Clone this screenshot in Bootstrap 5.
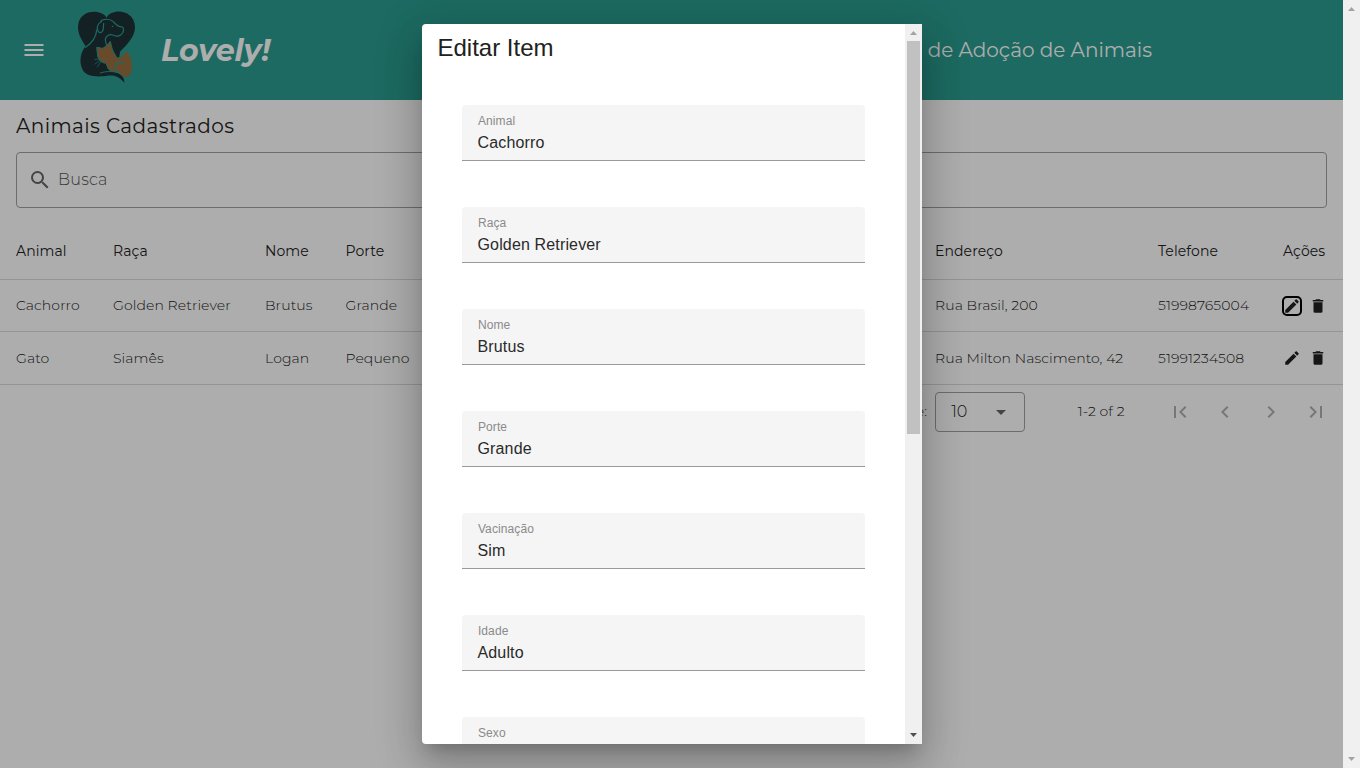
<!DOCTYPE html>
<html lang="pt-BR">
<head>
<meta charset="utf-8">
<meta name="viewport" content="width=device-width, initial-scale=1">
<title>Lovely!</title>
<link href="https://cdn.jsdelivr.net/npm/bootstrap@5.3.0/dist/css/bootstrap.min.css" rel="stylesheet">
<script src="https://cdn.jsdelivr.net/npm/bootstrap@5.3.0/dist/js/bootstrap.bundle.min.js"></script>
<style>
html,body{height:768px;overflow:hidden}
body{font-family:Montserrat,Inter,sans-serif;color:#212121;background:#fff}
.page{width:1343px;height:768px;position:relative;overflow:hidden}
.topbar{height:100px;background:#2a9d8f;color:#fff;padding:0 24px}
.logo{width:75px;height:80px;margin:-10px 0 0 26px}
.brandname{font-weight:700;font-style:italic;font-size:30px;margin-left:16px;white-space:nowrap}
.headline{font-size:20px;white-space:nowrap;margin-right:167px}
.heading{font-size:20px;line-height:32px;margin:10px 16px;letter-spacing:.41px}
.search{height:56px;margin:0 16px 15px;border:1px solid #a1a1a1;border-radius:4px;padding-left:11px}
.search span{font-size:16px;font-weight:300;letter-spacing:.2px;color:#555;margin:-1px 0 0 6px}
.pets{table-layout:fixed;width:1343px;margin:0;font-size:14px;--bs-table-bg:transparent}
.pets th,.pets td{padding:0 16px;border-bottom:1px solid #dadada;vertical-align:middle;white-space:nowrap;color:#212121}
.pets td{font-weight:300;height:52px;letter-spacing:.09px}
.pets tr:last-child td{height:53px;padding-top:1px}
.pets thead th{font-weight:400;height:56px;padding-top:2px;letter-spacing:.09px}
.pets td:last-child,.pets th:last-child{padding-right:0}
.actions{gap:8px;margin:2px 0 0 -.5px}
tr:last-child .actions{margin-top:0}
.act{width:18px;height:18px;fill:#212121}
.act.on{outline:2px solid #000;outline-offset:-1.5px;border-radius:4px}
.pager{height:54px;font-size:14px;font-weight:300;letter-spacing:.08px;padding-right:14.6px}
.perpage{width:90px;height:40px;border:1px solid #a1a1a1;border-radius:4px;font-size:16px;padding:0 11px 0 15px}
.nums{margin-left:52.5px;width:48px;white-space:nowrap}
.pagebtns{margin-left:42px;gap:21.6px}
.scrim{inset:0;background:rgba(0,0,0,.32);z-index:2}
.dialogbox{width:500px;height:720px;background:#fff;border-radius:4px 0 0 4px;overflow:hidden;font-family:"Liberation Sans",Arial,sans-serif;box-shadow:0 11px 15px -7px rgba(0,0,0,.2),0 24px 38px 3px rgba(0,0,0,.14),0 9px 46px 8px rgba(0,0,0,.12)}
.dialogbox h2{font-size:24px;line-height:32px;font-weight:400;margin:8px 16px 41px;color:#212121}
.field{height:56px;margin:0 40px 46px;background:#f5f5f5;border-bottom:1px solid #999;border-radius:4px 4px 0 0;padding:8px 16px 0}
.field label{display:block;font-size:12px;line-height:16px;color:#8a8a8a;letter-spacing:.11px;padding-left:.4px}
.field div{font-size:16px;line-height:24px;margin-top:2px;color:#2a2a2a;letter-spacing:.15px}
.bar{width:17px;background:#f0f0f0;flex:none}
.bar svg{display:block}
.thumb{width:13px;height:393px;background:#c1c1c1}
</style>
</head>
<body>
<div class="d-flex">
<div class="page">
  <header class="topbar d-flex align-items-center">
    <svg width="20" height="14" viewBox="0 0 20 14" fill="#fff"><path d="M.5 1h19v2H.5zM.5 6h19v2H.5zM.5 11h19v2H.5z"/></svg>
    <svg class="logo" viewBox="0 0 225 240">
      <path fill="#1d3137" d="M110 38C98 12 24 8 24 68C25 94 40 110 47 124C30 142 28 172 36 190C44 212 68 216 100 214C132 207 145 213 163 233C164 218 154 208 142 202L150 140C170 120 195 96 195 66C193 10 122 10 110 38Z"/>
      <g fill="none" stroke="#2a9d8f" stroke-width="3.600" stroke-linecap="round" stroke-linejoin="round">
        <path d="M47 127C68 112 78 98 80 76"/>
        <path d="M94 50C82 56 79 68 84 78C88 86 96 84 99 76C101 69 100 62 101 56M92 49C98 41 120 40 130 50C136 58 143 66 157 66C164 71 160 84 153 89C146 94 136 94 128 90C118 87 107 92 106 103C106 112 110 118 110 124"/>
        <circle cx="127" cy="64" r="1" stroke-width="2.500"/>
      </g>
      <path fill="#9a6f40" stroke="#2a9d8f" stroke-width="3" stroke-linejoin="round" d="M80 127L98 130Q111 124 121 109L126 130C130 142 137 151 141 159C154 158 164 146 169 137C186 150 191 184 184 204C178 218 166 221 157 212C145 200 130 199 120 197C111 190 112 181 108 175C94 174 86 165 83 154Z"/>
      <g fill="none" stroke="#2a9d8f" stroke-linecap="round">
        <path stroke-width="4" d="M140 200C130 174 145 167 161 174"/>
        <path stroke-width="3" d="M91 204C105 198 134 198 147 204"/>
        <path stroke-width="2" d="M92 160L74 164M93 164L75 177M94 168L82 186"/>
      </g>
    </svg>
    <div class="brandname">Lovely!</div>
    <div class="headline ms-auto">Sistema de Adoção de Animais</div>
  </header>
  <div class="heading">Animais Cadastrados</div>
  <div class="search d-flex align-items-center">
    <svg width="24" height="24" viewBox="0 0 24 24" fill="#666"><path d="M9.5 3A6.5 6.5 0 0 1 16 9.5c0 1.61-.59 3.09-1.56 4.23l.27.27h.79l5 5-1.5 1.5-5-5v-.79l-.27-.27A6.516 6.516 0 0 1 9.5 16 6.5 6.5 0 0 1 3 9.5 6.5 6.5 0 0 1 9.5 3m0 2C7 5 5 7 5 9.5S7 14 9.5 14 14 12 14 9.5 12 5 9.5 5z"/></svg>
    <span>Busca</span>
  </div>
  <table class="table pets">
    <colgroup><col style="width:97px"><col style="width:152px"><col style="width:80.5px"><col style="width:92.5px"><col style="width:497px"><col style="width:223px"><col style="width:125px"><col style="width:76px"></colgroup>
    <thead><tr><th>Animal</th><th>Raça</th><th>Nome</th><th>Porte</th><th></th><th>Endereço</th><th>Telefone</th><th>Ações</th></tr></thead>
    <tbody>
      <tr><td>Cachorro</td><td>Golden Retriever</td><td>Brutus</td><td>Grande</td><td></td><td>Rua Brasil, 200</td><td>51998765004</td><td><div class="actions d-flex"><svg class="act on" viewBox="0 0 24 24"><use href="#pen"/></svg><svg class="act" viewBox="0 0 24 24"><use href="#bin"/></svg></div></td></tr>
      <tr><td>Gato</td><td>Siamês</td><td>Logan</td><td>Pequeno</td><td></td><td>Rua Milton Nascimento, 42</td><td>51991234508</td><td><div class="actions d-flex"><svg class="act" viewBox="0 0 24 24"><use href="#pen"/></svg><svg class="act" viewBox="0 0 24 24"><use href="#bin"/></svg></div></td></tr>
    </tbody>
  </table>
  <div class="pager d-flex align-items-center justify-content-end">
    <span class="me-2">Items per page:</span>
    <div class="perpage d-flex align-items-center justify-content-between"><span>10</span><svg width="24" height="24" viewBox="0 0 24 24" fill="#666"><path d="M7 10l5 5 5-5z"/></svg></div>
    <div class="nums">1-2 of 2</div>
    <div class="pagebtns d-flex">
      <svg width="24" height="24" viewBox="0 0 24 24" fill="#b0b0b0"><path d="M18.41 16.59L13.82 12l4.59-4.59L17 6l-6 6 6 6zM6 6h2v12H6z"/></svg>
      <svg width="24" height="24" viewBox="0 0 24 24" fill="#b0b0b0"><path d="M15.41 16.58L10.83 12l4.58-4.59L14 6l-6 6 6 6z"/></svg>
      <svg width="24" height="24" viewBox="0 0 24 24" fill="#b0b0b0"><path d="M8.59 16.58L13.17 12 8.59 7.41 10 6l6 6-6 6z"/></svg>
      <svg width="24" height="24" viewBox="0 0 24 24" fill="#b0b0b0"><path d="M5.59 7.41L10.18 12l-4.59 4.59L7 18l6-6-6-6zM16 6h2v12h-2z"/></svg>
    </div>
  </div>
  <div class="scrim position-absolute d-flex align-items-center justify-content-center">
    <div class="dialogbox d-flex">
      <div class="flex-grow-1">
        <h2>Editar Item</h2>
        <div class="field"><label>Animal</label><div>Cachorro</div></div>
        <div class="field"><label>Raça</label><div>Golden Retriever</div></div>
        <div class="field"><label>Nome</label><div>Brutus</div></div>
        <div class="field"><label>Porte</label><div>Grande</div></div>
        <div class="field"><label>Vacinação</label><div>Sim</div></div>
        <div class="field"><label>Idade</label><div>Adulto</div></div>
        <div class="field"><label>Sexo</label></div>
      </div>
      <div class="bar d-flex flex-column align-items-center justify-content-between">
        <div><svg width="13" height="17" fill="#a3a3a3"><path d="M3 11h7L6.500 7z"/></svg><div class="thumb"></div></div>
        <svg width="13" height="17" fill="#505050"><path d="M3 6h7L6.500 10z"/></svg>
      </div>
    </div>
  </div>
</div>
<div class="bar d-flex flex-column align-items-center justify-content-between">
  <svg width="17" height="17" fill="#a3a3a3"><path d="M5 11h7L8.500 7z"/></svg>
  <svg width="17" height="17" fill="#a3a3a3"><path d="M5 6h7L8.500 10z"/></svg>
</div>
</div>
<svg class="d-none">
  <path id="pen" d="M20.710 7.040c.39-.39.39-1.040 0-1.410l-2.340-2.340c-.37-.39-1.020-.39-1.410 0l-1.840 1.830 3.750 3.750M3 17.250V21h3.750L17.810 9.930l-3.750-3.750z"/>
  <path id="bin" d="M19 4h-3.500l-1-1h-5l-1 1H5v2h14M6 19a2 2 0 0 0 2 2h8a2 2 0 0 0 2-2V7H6z"/>
</svg>
</body>
</html>
